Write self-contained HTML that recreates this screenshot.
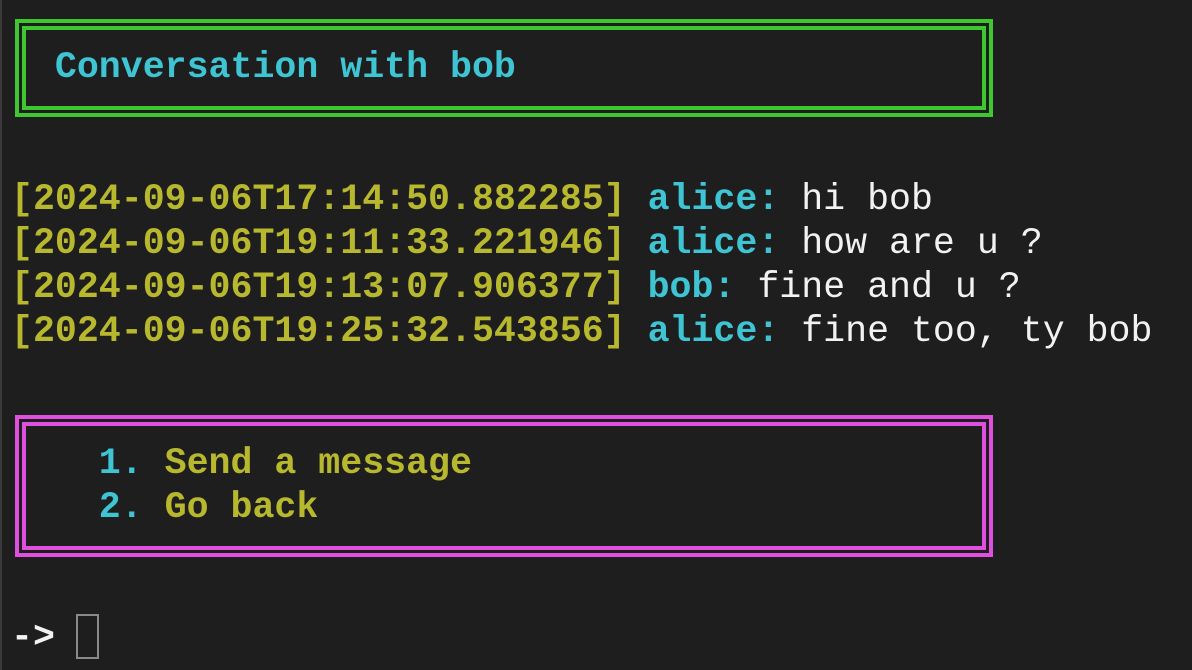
<!DOCTYPE html>
<html><head><meta charset="utf-8"><style>
html,body{margin:0;padding:0;}
body{width:1192px;height:670px;background:#1e1e1e;position:relative;overflow:hidden;font-family:"Liberation Mono",monospace;font-size:36.6px;}
.edge{position:absolute;left:0;top:0;width:2px;height:670px;background:#3a3a3a;}
.l{position:absolute;left:11px;white-space:pre;line-height:44px;height:44px;}
.y{color:#b8b82f;font-weight:bold}
.c{color:#3ec4d2;font-weight:bold}
.w{color:#f2f2f2}
.box{position:absolute;left:15px;width:970px;border:4px solid;}
.box::after{content:"";position:absolute;left:3px;top:3px;right:3px;bottom:3px;border:4px solid;border-color:inherit;}
</style></head><body>
<div class="edge"></div>
<div class="box" style="top:19px;height:90px;border-color:#3fc72f"></div>
<div class="l" style="top:46px"><span class="c">  Conversation with bob</span></div>
<div class="l" style="top:178px"><span class="y">[2024-09-06T17:14:50.882285]</span> <span class="c">alice:</span> <span class="w">hi bob</span></div>
<div class="l" style="top:222px"><span class="y">[2024-09-06T19:11:33.221946]</span> <span class="c">alice:</span> <span class="w">how are u ?</span></div>
<div class="l" style="top:266px"><span class="y">[2024-09-06T19:13:07.906377]</span> <span class="c">bob:</span> <span class="w">fine and u ?</span></div>
<div class="l" style="top:310px"><span class="y">[2024-09-06T19:25:32.543856]</span> <span class="c">alice:</span> <span class="w">fine too, ty bob</span></div>
<div class="box" style="top:415px;height:134px;border-color:#e04fe0"></div>
<div class="l" style="top:442px"><span class="c">    1.</span> <span class="y">Send a message</span></div>
<div class="l" style="top:486px"><span class="c">    2.</span> <span class="y">Go back</span></div>
<div class="l" style="top:616px"><span class="w" style="font-weight:bold">-&gt;</span></div>
<div style="position:absolute;left:76px;top:614px;width:19px;height:41px;border:2px solid #8a8a8a;box-sizing:content-box"></div>
</body></html>
